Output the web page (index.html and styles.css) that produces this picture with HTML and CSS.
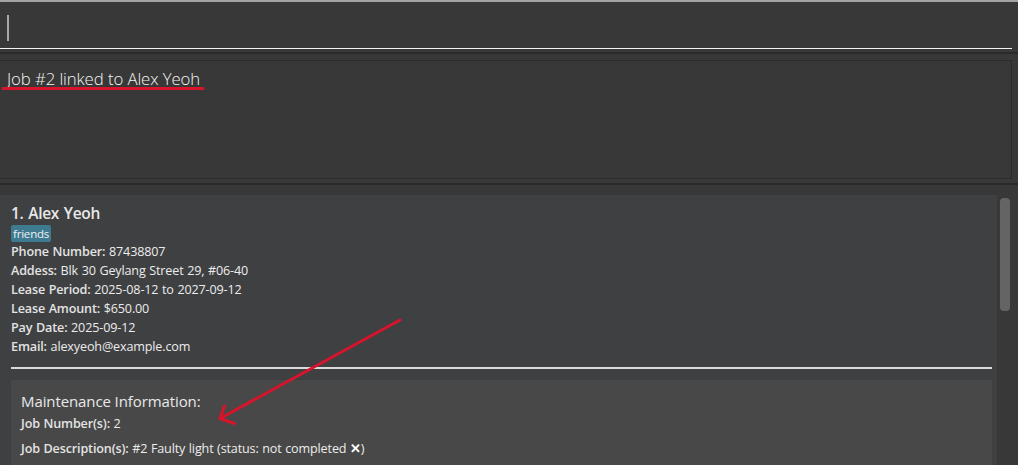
FILE: index.html
```html
<!DOCTYPE html>
<html>
<head>
<meta charset="utf-8">
<link rel="stylesheet" href="styles.css">
</head>
<body>
<div class="app">
  <div class="topstrip"></div>
  <div class="command">
    <div class="cmd-input"><span class="caret"></span></div>
  </div>
  <div class="divider"></div>
  <div class="result-wrap">
    <div class="result">Job #2 linked to Alex Yeoh</div>
  </div>
  <div class="divider"></div>
  <div class="list">
    <div class="list-main">
      <div class="card">
        <div class="name">1. Alex Yeoh</div>
        <div class="tags"><span class="tag">friends</span></div>
        <div class="row"><span class="label">Phone Number:</span> <span class="val">87438807</span></div>
        <div class="row"><span class="label">Addess:</span> <span class="val">Blk 30 Geylang Street 29, #06-40</span></div>
        <div class="row"><span class="label">Lease Period:</span> <span class="val">2025-08-12 to 2027-09-12</span></div>
        <div class="row"><span class="label">Lease Amount:</span> <span class="val">$650.00</span></div>
        <div class="row"><span class="label">Pay Date:</span> <span class="val">2025-09-12</span></div>
        <div class="row"><span class="label">Email:</span> <span class="val">alexyeoh@example.com</span></div>
        <div class="sep"></div>
        <div class="maint">
          <div class="maint-title">Maintenance Information:</div>
          <div class="mrow"><span class="label">Job Number(s):</span> <span class="val">2</span></div>
          <div class="mrow"><span class="label">Job Description(s):</span> <span class="val">#2 Faulty light (status: not completed <span class="cross">✕</span>)</span></div>
        </div>
      </div>
    </div>
    <div class="scrollbar"><div class="thumb"></div></div>
  </div>
  <svg class="annot" width="1018" height="465" viewBox="0 0 1018 465">
    <path d="M3 88.5 L203 88.5" stroke="#d8142c" stroke-width="3" stroke-linecap="round" fill="none"/>
    <path d="M400 320 L220 418.5" stroke="#d8142c" stroke-width="3" stroke-linecap="round" fill="none"/>
    <path d="M224.5 406 L220 418.5 L234.5 423.5" stroke="#d8142c" stroke-width="3" stroke-linecap="round" stroke-linejoin="round" fill="none"/>
  </svg>
</div>
</body>
</html>
```

FILE: styles.css
```css
* { box-sizing: border-box; }
html, body { margin: 0; padding: 0; }
body {
  background: #383838;
  font-family: "Open Sans", "Noto Sans", sans-serif;
  color: #e6e6e6;
  width: 1018px;
  height: 465px;
  overflow: hidden;
}
.app { position: relative; width: 1018px; height: 465px; overflow: hidden; }
.topstrip { height: 2px; background: #a3a3a3; }
.command { height: 50px; padding-right: 6px; }
.cmd-input {
  height: 47px;
  border-bottom: 1.5px solid #f2f2f2;
  padding: 13px 0 0 7px;
}
.caret { display: block; width: 2px; height: 26px; background: #a8a8a8; }
.divider { height: 2px; background: #2a2a2a; }
.result-wrap { height: 129px; padding: 6px 6px 4px 0; }
.result {
  height: 119px;
  border: 1px solid #2b2b2b;
  border-left: none;
  padding: 6px 0 0 7px;
  font-size: 16.8px;
  font-weight: 300;
  color: #f4f4f4;
  letter-spacing: -0.1px;
}
.list { display: flex; padding-top: 10px; height: 280px; }
.list-main { width: 997px; }
.card { background: #3f4042; height: 280px; padding: 7px 5px 0 11px; }
.name { font-size: 15.5px; font-weight: 600; color: #e8e8e8; line-height: 22px; letter-spacing: -0.3px; word-spacing: 1px; }
.tags { margin-top: 1px; height: 17px; display: flex; }
.tag {
  display: block;
  background: #3e7b91;
  color: #f0f0f0;
  font-size: 11.5px;
  line-height: 17px;
  height: 17px;
  padding: 0 2px;
  border-radius: 2px;
  letter-spacing: -0.2px;
}
.row { font-size: 12.6px; line-height: 19px; color: #e6e6e6; letter-spacing: -0.15px; word-spacing: 0.5px; }
.label { font-weight: 600; color: #e3e3e3; }
.val { color: #ececec; }
.sep { height: 2px; background: #dadada; margin: 11px 0 11px 0; }
.maint { background: #484848; height: 100px; padding: 10px 10px 0 10px; }
.maint-title { font-size: 15px; color: #e8e8e8; line-height: 22px; letter-spacing: -0.1px; }
.mrow { font-size: 12.6px; line-height: 24px; letter-spacing: -0.15px; word-spacing: 0.5px; }
.cross { font-weight: 700; font-size: 13px; color: #fff; }
.scrollbar { width: 21px; padding: 3px 0 0 3px; }
.thumb { width: 10px; height: 113px; background: #646464; border-radius: 4px; }
.annot { position: absolute; left: 0; top: 0; pointer-events: none; }
```
